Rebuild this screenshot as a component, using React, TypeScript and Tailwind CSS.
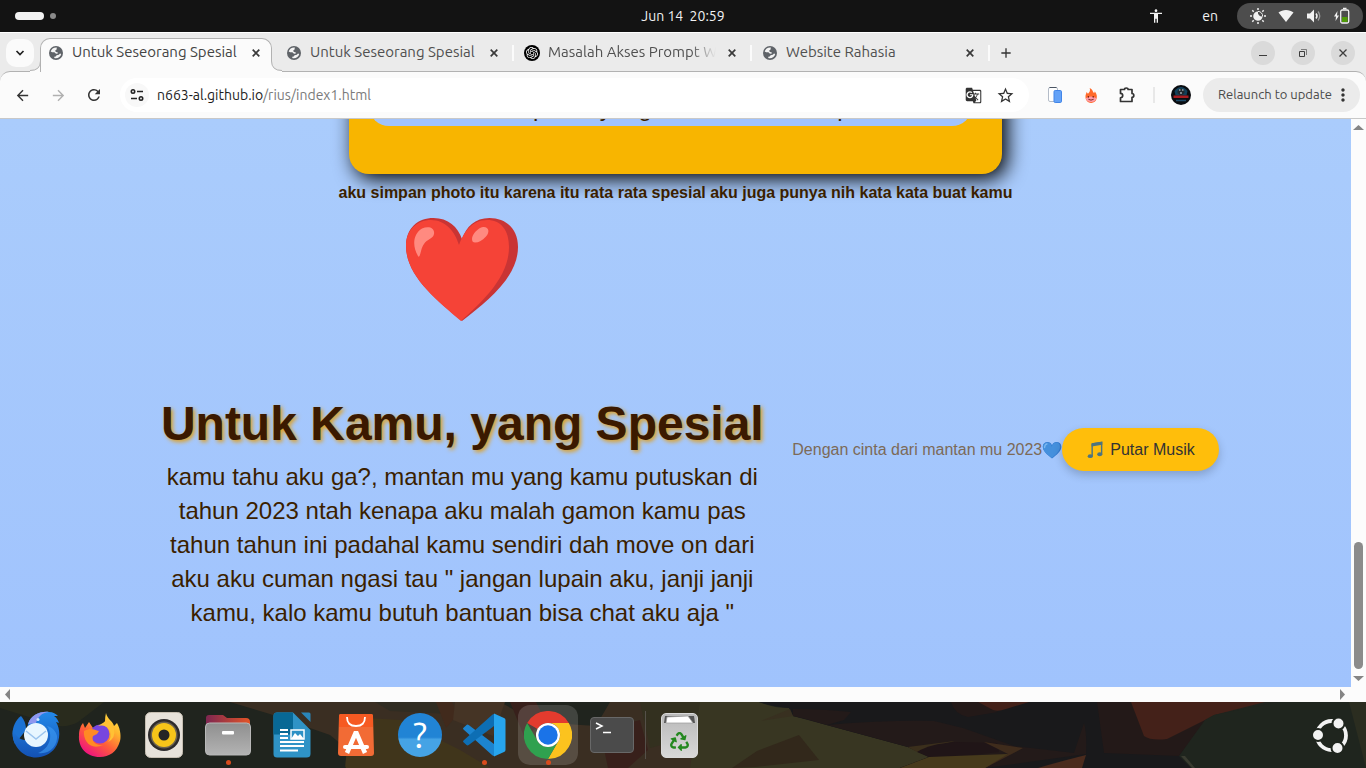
import React from "react";
import {
  MdAccessibility,
  MdArrowBack,
  MdArrowForward,
  MdGTranslate,
  MdMoreVert,
  MdRefresh,
  MdStarBorder,
  MdAdd,
} from "react-icons/md";
import { SiOpenai } from "react-icons/si";
import { FaRecycle } from "react-icons/fa";

/* ---------- desktop top bar ---------- */

function TopBar() {
  return (
    <header className="grid h-8 shrink-0 grid-cols-[1fr_auto_1fr] items-center bg-[#131313] text-sm text-[#f2f2f2]">
      <div className="flex items-center gap-[6px] pl-[15px]">
        <span className="h-2 w-[29px] rounded-full bg-[#f2f2f2]" />
        <span className="h-[6px] w-[6px] rounded-full bg-[#8a8a8a]" />
      </div>
      <time className="pb-px whitespace-pre">Jun 14  20:59</time>
      <div className="flex items-center justify-end pr-[3px]">
        <MdAccessibility size={16} className="mr-[38px]" />
        <span className="mr-[19px]">en</span>
        <div className="flex h-[26px] w-[126px] items-center justify-around rounded-full bg-[#4d4d4d] px-[6px]">
          <svg width="18" height="18" viewBox="0 0 18 18">
            <g stroke="#f2f2f2" strokeWidth="1.5">
              <path d="M9 1v2M9 15v2M1 9h2M15 9h2M3.3 3.3l1.4 1.4M13.3 13.3l1.4 1.4M3.3 14.7l1.4-1.4M13.3 4.7l1.4-1.4" />
            </g>
            <path d="M9 4.400A4.700 4.700 0 1 0 13.600 9.500 4.200 4.200 0 0 1 9 4.400z" fill="#f2f2f2" />
            <path d="M9 4.400a4.600 4.600 0 0 1 4.600 5.100" fill="none" stroke="#f2f2f2" />
          </svg>
          <svg width="16" height="16" viewBox="0 0 16 16">
            <path d="M0.500 4.500C4.500 1 11.500 1 15.500 4.500L8 14z" fill="#f2f2f2" />
          </svg>
          <svg width="16" height="16" viewBox="0 0 16 16">
            <path d="M1 5.500h3l4-4v13l-4-4H1z" fill="#f2f2f2" />
            <path d="M10 5.500q2 2.500 0 5" fill="none" stroke="#f2f2f2" strokeWidth="1.500" />
            <path d="M12 3.500q3.500 4.500 0 9" fill="none" stroke="#999" strokeWidth="1.300" />
          </svg>
          <svg width="18" height="18" viewBox="0 0 18 18">
            <path d="M4.500 4 1 9.500h2L2.500 14 6 8.500H4z" fill="#f2f2f2" />
            <rect x="7.700" y="3" width="8" height="13" rx="1.500" fill="none" stroke="#f2f2f2" strokeWidth="1.300" />
            <path d="M10 1.500h3.500" stroke="#f2f2f2" strokeWidth="1.500" />
            <path d="M9 10h5.500v5H9z" fill="#4e9a06" />
          </svg>
        </div>
      </div>
    </header>
  );
}

/* ---------- browser chrome ---------- */

function Globe() {
  return (
    <svg width="14" height="14" viewBox="0 0 14 14">
      <circle cx="7" cy="7" r="7" fill="#5f6368" />
      <path d="M7.800 1.600C5 1.300 2.300 3 1.700 5.600L3.200 6.200H5.400L7 7.700 8.800 7.600 8.600 6.300 6.800 6.100 6.200 4.600 7.600 3.500z" fill="#f4f4f4" />
      <path d="M5.300 12.100C8.500 13 11.700 11 12.200 8L11 7.500 9.800 8.800 7.600 9.300 6.700 10.600 5.300 10.800z" fill="#f4f4f4" />
    </svg>
  );
}

function GptIcon() {
  return (
    <span className="flex h-4 w-4 items-center justify-center rounded-full bg-black text-white">
      <SiOpenai size={12} />
    </span>
  );
}

function TabBody({ title, icon, fade = false }: { title: string; icon: React.ReactNode; fade?: boolean }) {
  return (
    <>
      <span className="flex w-4 shrink-0 justify-center">{icon}</span>
      <span
        className={
          fade
            ? "w-[168px] shrink-0 overflow-hidden whitespace-nowrap [mask-image:linear-gradient(to_right,black_85%,transparent)]"
            : "w-[168px] shrink-0 overflow-hidden whitespace-nowrap"
        }
      >
        {title}
      </span>
      <button aria-label="Close tab" className="flex h-4 w-4 shrink-0 items-center justify-center text-[#3a3a3a]">
        <svg width="8" height="8" viewBox="0 0 8 8">
          <path d="m.7.700 6.600 6.600m0-6.600L.7 7.300" stroke="currentColor" strokeWidth="1.700" />
        </svg>
      </button>
    </>
  );
}

function TabStrip() {
  return (
    <div className="relative z-10 -mb-px flex h-10 items-end border-t border-white pr-[11px] text-[15px] text-[#505050]">
      <div className="flex h-full w-[30px] shrink-0 items-center pl-[6px]">
        <button aria-label="Search tabs" className="flex h-7 w-7 shrink-0 items-center justify-center rounded-[10px] bg-[#fbfbfb] text-[#222]">
          <svg width="10" height="8" viewBox="0 0 10 8">
            <path d="m1.500 2 3.500 3.500L8.500 2" fill="none" stroke="currentColor" strokeWidth="1.700" />
          </svg>
        </button>
      </div>
      <svg className="relative -z-10 shrink-0" width="11" height="11" viewBox="0 0 11 11">
        <path d="M0 10Q10.500 10 10.500 0H11V11H0z" fill="#fbfbfb" />
        <path d="M0 9.500Q10.500 9.500 10.500 0" fill="none" stroke="#b2b2b2" />
      </svg>
      <div className="-ml-px flex h-[34px] shrink-0 items-center gap-2 rounded-t-[10px] border border-b-0 border-[#b2b2b2] bg-[#fbfbfb] px-[7px] pb-[6px] text-[#444]">
        <TabBody title="Untuk Seseorang Spesial" icon={<Globe />} />
      </div>
      <svg className="-ml-px shrink-0" width="11" height="11" viewBox="0 0 11 11">
        <path d="M11 10Q.5 10 .5 0H0V11H11z" fill="#fbfbfb" />
        <path d="M11 9.500Q.5 9.500 .5 0" fill="none" stroke="#b2b2b2" />
      </svg>
      <div className="flex h-full items-center">
        <div className="flex h-4 w-[232px] items-center gap-2 border-r-2 border-[#fbfbfb] pl-1">
          <TabBody title="Untuk Seseorang Spesial" icon={<Globe />} />
        </div>
        <div className="flex h-4 w-[238px] items-center gap-2 border-r-2 border-[#fbfbfb] pl-[10px]">
          <TabBody title="Masalah Akses Prompt Web" icon={<GptIcon />} fade />
        </div>
        <div className="flex h-4 w-[238px] items-center gap-2 border-r-2 border-[#fbfbfb] pl-[10px]">
          <TabBody title="Website Rahasia" icon={<Globe />} />
        </div>
        <button aria-label="New tab" className="ml-2 flex h-4 w-4 items-center justify-center text-[#333]">
          <MdAdd size={18} />
        </button>
      </div>
      <div className="ml-auto flex h-full items-center gap-4 text-[#3d3d3d]">
        <button aria-label="Minimize" className="flex h-6 w-6 items-center justify-center rounded-full bg-[#dadada]">
          <svg width="10" height="10" viewBox="0 0 10 10">
            <path d="M1 7.500h8" stroke="currentColor" />
          </svg>
        </button>
        <button aria-label="Restore" className="flex h-6 w-6 items-center justify-center rounded-full bg-[#dadada]">
          <svg width="10" height="10" viewBox="0 0 10 10" fill="none" stroke="currentColor">
            <path d="M1.500 3.500h5v5h-5z" />
            <path d="M3 1.500h5.500V7" opacity=".6" />
          </svg>
        </button>
        <button aria-label="Close window" className="flex h-6 w-6 items-center justify-center rounded-full bg-[#dadada]">
          <svg width="10" height="10" viewBox="0 0 10 10">
            <path d="m1.500 1.500 7 7m0-7-7 7" stroke="currentColor" strokeWidth="1.300" />
          </svg>
        </button>
      </div>
    </div>
  );
}

function Toolbar() {
  return (
    <div className="flex h-12 items-center rounded-t-[10px] border-t border-b border-t-[#b2b2b2] border-b-[#c8c8c8] bg-[#fbfbfb] pr-[6px] pl-1 text-[#333]">
      <button aria-label="Back" className="flex w-9 justify-center"><MdArrowBack size={17} /></button>
      <button aria-label="Forward" className="flex w-9 justify-center text-[#b0b0b0]"><MdArrowForward size={17} /></button>
      <button aria-label="Reload" className="flex w-9 justify-center"><MdRefresh size={18} /></button>
      <div className="ml-2 flex h-[34px] min-w-0 flex-1 items-center rounded-full bg-white pl-[5px]">
        <button aria-label="Site information" className="flex h-6 w-6 items-center justify-center rounded-full bg-[#f8f8f8]">
          <svg width="14" height="14" viewBox="0 0 14 14" fill="none" stroke="#222" strokeWidth="1.600">
            <circle cx="3" cy="3.500" r="1.700" />
            <path d="M7 3.500h6M1 10.500h6" />
            <circle cx="11" cy="10.500" r="1.700" />
          </svg>
        </button>
        <p className="flex-1 pl-2 text-[14px] text-[#7a7a7a]">
          <span className="text-[#1c1c1c]">n663-al.github.io</span>/rius/index1.html
        </p>
        <button aria-label="Translate this page" className="flex w-8 justify-center"><MdGTranslate size={17} /></button>
        <button aria-label="Bookmark this tab" className="mr-2 flex w-8 justify-center"><MdStarBorder size={19} /></button>
      </div>
      <button aria-label="Mobile simulator" className="ml-2 flex w-9 justify-center">
        <svg width="16" height="18" viewBox="0 0 16 18">
          <rect x="1.500" y="1.500" width="9" height="14" rx="1.500" fill="#fff" stroke="#b4bcc8" />
          <path d="M2.500 1.500h7" stroke="#4b5563" />
          <rect x="7" y="4.500" width="7.500" height="12" rx="1.200" fill="#64a2f7" stroke="#4285e8" />
        </svg>
      </button>
      <button aria-label="Fire extension" className="flex w-9 justify-center">
        <svg width="14" height="17" viewBox="0 0 16 18">
          <path d="M6.500.5C11 3 9.500 5 11.500 6c.8-.6.8-1.500.8-2C15 8 15 10 14.400 12.500A6.500 6.500 0 0 1 8 17.500 6.300 6.300 0 0 1 1.700 11C1.500 8.500 2.500 7 3 5l1.500 2C6.500 5.500 7.500 3.500 6.500.5z" fill="#ff6a2b" />
          <path d="M2 12q6-4 12.300 0A6.500 6.500 0 0 1 2 12z" fill="#ff9aa8" />
          <path d="M5 10.500v.2M10.500 10.500v.2" stroke="#6b1d10" strokeWidth="1.600" strokeLinecap="round" />
          <path d="M5 13.300q3 2 6 0" fill="none" stroke="#6b1d10" />
        </svg>
      </button>
      <button aria-label="Extensions" className="flex w-9 justify-center">
        <svg width="18" height="18" viewBox="0 0 18 18" fill="none" stroke="#333" strokeWidth="1.700" strokeLinejoin="round">
          <path d="M2.500 3.500h4a1.800 1.500 0 0 1 3.600 0H14v4a1.800 1.900 0 0 1 0 3.800v4.200H2.500v-3.700a2.200 2.200 0 0 0 0-4.400z" />
        </svg>
      </button>
      <span className="mx-2 h-4 w-[2px] bg-[#e8e8e8]" />
      <button aria-label="Profile" className="flex w-9 justify-center">
        <svg width="20" height="20" viewBox="0 0 20 20">
          <circle cx="10" cy="10" r="10" fill="#0a0c10" />
          <path d="M3.500 6q6.500-8 13 0l-1 4.500h-11z" fill="#12405a" />
          <path d="M6.500 6q3.500-5 7 0v2l-3.500 3-3.500-3z" fill="#20282e" />
          <path d="M8 5h1.500M11 5h1.500M9 8h2" stroke="#d7e5ea" />
          <path d="M2.500 10.500h15v2.500h-15z" fill="#a71c20" />
          <path d="M5 15.500h10" stroke="#1d4a68" strokeWidth="1.500" />
        </svg>
      </button>
      <button className="ml-1 flex h-[34px] w-[157px] items-center justify-between rounded-full bg-[#ebebeb] pr-2 pl-[15px] text-[13px] whitespace-nowrap text-[#4a4a4a]">
        Relaunch to update
        <MdMoreVert size={20} className="-mx-px shrink-0 text-[#333]" />
      </button>
    </div>
  );
}

/* ---------- web page ---------- */

function RedHeart() {
  return (
    <svg width="114" height="105" viewBox="0 0 114 105" role="img" aria-label="Heart">
      <path d="M57 104C30 82 1 58 1 29 1 11 13 1 28.500 1 43 1 53 10 57 22 61 10 70 1 84.500 1 101 1 113 12 113 30c0 30-30 54-56 74z" fill="#c93434" />
      <path d="M56 104C30 82 1 58 1 29 1 13 12 3 26 3c14 0 24 11 28 25 5-14 14-25 28-25 14 0 22 10 22 27 0 30-26 54-48 74z" fill="#f54337" />
      <path d="M13 39C7 29 8 17 17 11.500c7-3 13-.5 12 5.500-1 5-7 5-10 10-3 4-3 9-4.500 12-.8 1-1 .8-1.500 0z" fill="#ff8a80" />
      <path d="M67 22c0-5 6-11 11-12 6-.5 7 5 3 9.500-4 4-7 6-11 6-2 0-3-1-3-3.500z" fill="#ff8a80" />
    </svg>
  );
}

function BlueHeart() {
  return (
    <svg className="inline" width="20" height="20" viewBox="0 0 20 20" role="img" aria-label="Blue heart">
      <path d="M10 18.500C5 14.500.8 11 .8 6.500.8 3.500 3 2 5.500 2 8 2 9.500 3.500 10 5.500 10.500 3.500 12 2 14.500 2c3 0 4.900 1.700 4.900 4.700 0 4.500-4.900 8.300-9.400 11.800z" fill="#347bd1" />
      <path d="M9.800 18C5 14 .8 11 .8 6.500.8 3.800 3 2.400 5.300 2.400 8 2.400 9.300 4.500 9.700 6.700 10.500 4 12 2.400 14.300 2.400c2.400 0 3.700 1.700 3.700 4.300 0 4.300-4.500 8-8.200 11.300z" fill="#4590dd" />
      <path d="M2.600 7.500q0-3 2.400-3.600" fill="none" stroke="#7db9f2" strokeWidth="1.300" strokeLinecap="round" />
    </svg>
  );
}

function Notes() {
  return (
    <svg width="18" height="18" viewBox="0 0 19 19" aria-hidden="true">
      <path d="M6.500 3 16.500 1.500v12.500M6.500 3v13" fill="none" stroke="#4d7480" strokeWidth="1.500" />
      <path d="M5.800 2.500 17.200.7v3.300L6 5.700z" fill="#4d7480" />
      <ellipse cx="4.500" cy="16" rx="2.700" ry="2" fill="#4d7480" />
      <ellipse cx="14.500" cy="14" rx="2.700" ry="2" fill="#4d7480" />
    </svg>
  );
}

function WebPage() {
  return (
    <main className="flex min-w-0 flex-1 flex-col items-center overflow-hidden bg-linear-to-b from-[#aaccfc] to-[#a0c3fd] font-['Liberation_Sans',Arial,sans-serif] text-[#3b1f00]">
      <section className="-mt-10 w-[653px] rounded-[20px] bg-[#f8b500] pt-10 pr-[30px] pb-12 pl-5 shadow-[5px_5px_20px_#000]">
        <div className="-mt-10 flex h-[47px] items-end justify-center rounded-b-[20px] bg-[#a1c3fc] pb-1">
          <p className="text-2xl leading-7">ini lah photo yang rata rata aku simpan</p>
        </div>
      </section>
      <p className="mt-[10px] text-base leading-[18px] font-bold">
        aku simpan photo itu karena itu rata rata spesial aku juga punya nih kata kata buat kamu
      </p>
      <div className="flex items-center pt-[15px]">
        <article className="flex w-[660px] flex-col items-center px-[30px] pb-[52px] text-center">
          <RedHeart />
          <h1 className="mt-[74px] text-5xl leading-[56px] font-bold whitespace-nowrap text-[#3b1900] [text-shadow:2px_2px_4px_#e0a020]">
            Untuk Kamu, yang Spesial
          </h1>
          <p className="mt-2 text-2xl leading-[34px]">
            kamu tahu aku ga?, mantan mu yang kamu putuskan di tahun 2023 ntah kenapa aku malah gamon kamu pas tahun
            tahun ini padahal kamu sendiri dah move on dari aku aku cuman ngasi tau " jangan lupain aku, janji janji
            kamu, kalo kamu butuh bantuan bisa chat aku aja "
          </p>
        </article>
        <footer className="flex items-center text-base whitespace-nowrap text-[#7c6a58]">
          Dengan cinta dari mantan mu 2023
          <BlueHeart />
        </footer>
        <button className="flex h-[43px] items-center gap-[6px] rounded-full bg-[#ffbe0b] px-6 text-base whitespace-nowrap text-[#333] shadow-[0_4px_10px_rgba(0,0,0,0.2)]">
          <Notes />
          Putar Musik
        </button>
      </div>
    </main>
  );
}

function Arrow({ d }: { d: string }) {
  return (
    <svg width="11" height="11" viewBox="0 0 11 11" className="shrink-0">
      <path d={d} fill="#858585" />
    </svg>
  );
}

function Viewport() {
  return (
    <div className="flex min-h-0 flex-1 flex-col bg-[#fcfcfc]">
      <div className="flex min-h-0 flex-1">
        <WebPage />
        <div className="flex w-[15px] shrink-0 flex-col items-center py-[3px]">
          <Arrow d="M0 8h11L5.500 3z" />
          <span className="mt-auto mb-1 h-[127px] w-[9px] rounded-full bg-[#8b8b8b]" />
          <Arrow d="M0 3h11L5.500 8z" />
        </div>
      </div>
      <div className="flex h-[15px] shrink-0 items-center justify-between pr-[18px] pl-[2px]">
        <Arrow d="M8 0v11L3 5.500z" />
        <Arrow d="M3 0v11l5-5.500z" />
      </div>
    </div>
  );
}

/* ---------- dock ---------- */

function Camo() {
  return (
    <svg className="col-start-1 row-start-1 h-full w-full" viewBox="0 0 1366 66" preserveAspectRatio="none" aria-hidden="true">
      <path d="M0 0h1366v66H0z" fill="#20241e" />
      <path d="M0 0h104L78 20q-8 5-20 4L0 6z" fill="#292b1d" />
      <path d="M230 0h480v66H370L330 33 270 12z" fill="#3a2e22" />
      <path d="M360 0h75l15 12-60-3-15-9z" fill="#302c22" />
      <path d="M350 15l50 3 60 30 30 18H345z" fill="#40351b" />
      <path d="M330 34l16 32h-16zM500 0h110l-14 24-60-4z" fill="#20241e" />
      <path d="M510 0h26l10 20-22 14zM600 28l40-10 8 30-20 18h-20z" fill="#38201b" />
      <path d="M436 0h16l6 12-12 14z" fill="#412a1c" />
      <path d="M455 0h50l-12 34-40-16z" fill="#453425" />
      <path d="M640 0h60l10 30-60 16z" fill="#33301f" />
      <path d="M700 0h59q15 6 30 6l4 8q16 3 30 8l85 23q15 4 21 10l-29 11H690z" fill="#383622" />
      <path d="M732 66l25-17 42-16 20 25-64 7z" fill="#32281b" />
      <path d="M759 0h440v66H900l29-11-21-10-85-23-30-8-4-8Q770 4 759 0z" fill="#19191b" />
      <path d="M761 19 790 7l3 7z" fill="#383020" />
      <path d="M793 7q30 0 58 3l-7 8-17 5-25-7-9-2z" fill="#231a19" />
      <path d="M827 23q60-5 107-4l29 7 51 18 60 7 10-30q3 10 2 31l-101 14h-85l29-11-21-10z" fill="#231a19" />
      <path d="M908 45l47-6-38 11z" fill="#3b2f1c" />
      <path d="M917 50q12-8 38-10l42 1 2 9-27 3-43 2z" fill="#201517" />
      <path d="M984 40l39 6-38 20h-15l38-14z" fill="#3f2c1c" />
      <path d="M929 55l79-3-23 14h-85z" fill="#473a1c" />
      <path d="M1038 66q20-6 48-13l-4 13z" fill="#4b2b1d" />
      <path d="M951 0h27l20 10-30 5q-14-3-17-15zM1097 0h110v18l-28 36-75-3z" fill="#231918" />
      <path d="M978 0h51l-23 7q-8 3-13 1z" fill="#442119" />
      <path d="M1131 0h134l-51 13-9 5-38 19q-16 2-23-3z" fill="#442119" />
      <path d="M1278 0h88v66h-175l-12-12 26-36 9-5z" fill="#1f251e" />
      <path d="M1181 54h4l10 12h-3z" fill="#393b30" />
      <path d="M1349 0h17v66z" fill="#2b2d20" />
    </svg>
  );
}

function Thunderbird() {
  return (
    <svg width="50" height="50" viewBox="0 0 50 50">
      <defs>
        <linearGradient id="tb-body" x1="0" y1="0" x2="0" y2="1">
          <stop offset="0" stopColor="#2389e9" />
          <stop offset="1" stopColor="#1351b4" />
        </linearGradient>
      </defs>
      <path d="M10 6c4 5 5 9 5 14L4 34C-1 24 2 12 10 6z" fill="#1b72d4" />
      <path d="M17 14C20 5 29 1 38 2c4 0 7 2 9 4h-4c3 2 4 4 5 7l-3-1c5 8 4 19-1 26-8 11-25 13-35 3C2 34 1 25 2 20c3 6 7 10 12 10z" fill="url(#tb-body)" />
      <path d="M17 14C20 5 29 1 38 2c-8 1-11 5-13 11z" fill="#8f97ef" />
      <path d="M36 16c6 8 4 22-9 27 12 2 20-8 19-17-1-5-5-9-10-10z" fill="#3f9cf5" opacity=".6" />
      <circle cx="25" cy="25" r="12" fill="#e8f6ff" />
      <path d="m15 21 10 8 10-8" fill="none" stroke="#9cc4ee" strokeWidth="1.500" />
      <circle cx="27" cy="9.500" r="1.500" fill="#cfeaff" />
    </svg>
  );
}

function Firefox() {
  return (
    <svg width="44" height="46" viewBox="0 0 44 46">
      <defs>
        <linearGradient id="ff-body" x1="1" y1="0" x2=".3" y2="1">
          <stop offset="0" stopColor="#fff04c" />
          <stop offset=".35" stopColor="#ffb42e" />
          <stop offset=".65" stopColor="#ff5f38" />
          <stop offset="1" stopColor="#ef147e" />
        </linearGradient>
      </defs>
      <path d="M28 1c1 6 7 8 8 13l3-3c4 7 4 15 3 18-3 11-11 16-20 16C8 45 0 35 1 23c0-5 2-10 4-12l2 5 4-6 4 6 8 1 4-8q0-4 1-8z" fill="url(#ff-body)" />
      <circle cx="22" cy="22" r="9.500" fill="#7746df" />
      <path d="M6 19c8-4 10-1 15 0l-2 3-4 2c-2 5 3 10 10 9-13 6-20-5-19-14z" fill="#ff8a24" />
      <path d="M20 14q8-2 12 5 2 7-2 11 8-4 6-13-2-6-8-8z" fill="#ffc134" />
    </svg>
  );
}

function Speaker() {
  return (
    <svg width="38" height="46" viewBox="0 0 38 46">
      <rect x=".5" y=".5" width="37" height="45" rx="5" fill="#e7e2da" stroke="#c6beb2" />
      <circle cx="19" cy="23" r="16" fill="#2d2b2c" />
      <circle cx="19" cy="23" r="13.500" fill="#6b6250" />
      <circle cx="19" cy="23" r="12" fill="#f6c51a" />
      <circle cx="19" cy="23" r="5.500" fill="#252525" />
    </svg>
  );
}

function Files() {
  return (
    <svg width="46" height="42" viewBox="0 0 46 42">
      <defs>
        <linearGradient id="files-back">
          <stop offset="0" stopColor="#7d2651" />
          <stop offset="1" stopColor="#e35427" />
        </linearGradient>
        <linearGradient id="files-front" x1="0" y1="0" x2="0" y2="1">
          <stop offset="0" stopColor="#8f8f8f" />
          <stop offset="1" stopColor="#b3b3b3" />
        </linearGradient>
      </defs>
      <path d="M1 4q0-3 3-3h14l4 3h19q4 0 4 4v12H1z" fill="url(#files-back)" />
      <rect x=".5" y="9" width="45" height="32" rx="4" fill="url(#files-front)" stroke="#b8b8b8" />
      <rect x="17" y="17" width="12" height="3.500" rx="1" fill="#fff" />
    </svg>
  );
}

function Writer() {
  return (
    <svg width="38" height="46" viewBox="0 0 38 46">
      <path d="M4 .5h16L37.500 18v24q0 3.500-4 3.500H4q-3.500 0-3.500-3.500V4Q.5.500 4 .5z" fill="#2f93c6" />
      <path d="M4 .5h16v22H.5V4Q.5.500 4 .5z" fill="#086895" />
      <path d="M28 .5h8q1.500 0 1.500 1.500v8z" fill="#2a85b8" />
      <path d="M7 18h8M7 22h8M7 26h8M7 30h24M7 34h24M7 38.500h18" stroke="#fff" strokeWidth="2" />
      <rect x="18" y="18" width="13" height="9" fill="#2d91c5" stroke="#fff" strokeWidth="1.500" />
      <path d="m18 27 4-6 3 3 2-2 4 5z" fill="#fff" />
    </svg>
  );
}

function AppCenter() {
  return (
    <svg width="38" height="44" viewBox="0 0 38 44">
      <path d="M4 1h30q2 0 2 2l1 37q0 3-3 3H4q-3 0-3-3L2 3q0-2 2-2z" fill="#f26b35" />
      <path d="M4 1h30q2 0 2 2v11H2V3q0-2 2-2z" fill="#f65a22" />
      <path d="M10 4q0 9 9 9t9-9" fill="none" stroke="#fff" strokeWidth="1.800" />
      <path d="m10 40 9-21 9 21" fill="none" stroke="#fff" strokeWidth="4.500" strokeLinejoin="bevel" />
      <path d="M8 34h22" stroke="#fff" strokeWidth="4" strokeLinecap="round" />
    </svg>
  );
}

function Help() {
  return (
    <span className="flex h-11 w-11 items-center justify-center rounded-full bg-linear-to-b from-[#2184d5] from-55% to-[#45a3e5] to-60% text-[36px] leading-none text-white">
      ?
    </span>
  );
}

function VsCode() {
  return (
    <svg width="44" height="44" viewBox="0 0 44 44">
      <path d="M1.500 16.500Q.5 15.500 1.500 14.700L4.500 12q1-.8 2.200 0L32 31v12q-1 0-2-1z" fill="#1c84cf" />
      <path d="M1.500 27.500Q.5 28.500 1.500 29.300l3 2.700q1 .8 2.200 0L32 13V1q-1 0-2 1z" fill="#0d6eb4" />
      <path d="M32 .5 42 5q1.500.7 1.500 2v30q0 1.300-1.500 2L32 43.500z" fill="#27a5ee" />
    </svg>
  );
}

function Chrome() {
  return (
    <svg width="48" height="48" viewBox="0 0 48 48">
      <path d="M3.200 12A24 24 0 0 1 44.800 12H24A12 12 0 0 0 13.600 18z" fill="#e33b2e" />
      <path d="M44.800 12A24 24 0 0 1 24 48l10.400-18A12 12 0 0 0 24 12z" fill="#fcc31e" />
      <path d="M24 48A24 24 0 0 1 3.200 12l10.400 18A12 12 0 0 0 34.400 30z" fill="#2fa14f" />
      <circle cx="24" cy="24" r="12" fill="#fff" />
      <circle cx="24" cy="24" r="9.700" fill="#1a73e8" />
    </svg>
  );
}

function Terminal() {
  return (
    <svg width="44" height="36" viewBox="0 0 44 36">
      <rect x=".5" y=".5" width="43" height="35" rx="3.500" fill="#4b4b4b" stroke="#686868" />
      <path d="m6 6 6 3-6 3M13 15.500h8" fill="none" stroke="#fff" strokeWidth="1.500" />
    </svg>
  );
}

function Trash() {
  return (
    <span className="flex h-[45px] w-[37px] flex-col items-center rounded-[5px] border border-[#d9d9d9] bg-linear-to-b from-[#b9b9b9] to-[#d8d8d8]">
      <svg width="31" height="10" viewBox="0 0 31 10">
        <path d="M1 2h29l1 7H0z" fill="#555" />
        <path d="m3 3 21-1 5 7H2z" fill="#fff" stroke="#999" strokeWidth=".7" />
      </svg>
      <FaRecycle size={19} className="mt-2 text-[#23881f]" />
    </span>
  );
}

function UbuntuLogo() {
  return (
    <svg width="38" height="38" viewBox="0 0 38 38">
      <circle cx="19.500" cy="19.500" r="14.500" fill="none" stroke="#f2f2f2" strokeWidth="3.800" />
      <g fill="#f2f2f2" stroke="#1f251e" strokeWidth="2">
        <circle cx="6" cy="19" r="6" />
        <circle cx="26.500" cy="7.500" r="6" />
        <circle cx="25.500" cy="32" r="6" />
      </g>
    </svg>
  );
}

const apps: { name: string; icon: React.ReactNode; running?: boolean; active?: boolean }[] = [
  { name: "Thunderbird", icon: <Thunderbird /> },
  { name: "Firefox", icon: <Firefox /> },
  { name: "Rhythmbox", icon: <Speaker /> },
  { name: "Files", icon: <Files />, running: true },
  { name: "LibreOffice Writer", icon: <Writer /> },
  { name: "App Center", icon: <AppCenter /> },
  { name: "Help", icon: <Help /> },
  { name: "Visual Studio Code", icon: <VsCode />, running: true },
  { name: "Google Chrome", icon: <Chrome />, running: true, active: true },
  { name: "Terminal", icon: <Terminal /> },
];

function Dock() {
  return (
    <nav className="grid h-[66px] shrink-0 grid-cols-1">
      <Camo />
      <div className="col-start-1 row-start-1 flex items-center pr-4 pl-1">
        {apps.map((app) => (
          <div key={app.name} className="flex w-16 shrink-0 justify-center">
            <button
              aria-label={app.name}
              className={
                app.active
                  ? "relative flex h-[60px] w-[60px] items-center justify-center rounded-xl bg-white/15"
                  : "relative flex h-[60px] w-[60px] items-center justify-center rounded-xl"
              }
            >
              {app.icon}
              {app.running && <span className="absolute bottom-0 h-[5px] w-[5px] rounded-full bg-[#d94b1c]" />}
            </button>
          </div>
        ))}
        <span className="ml-px h-12 w-px bg-[#555049]" />
        <button aria-label="Trash" className="flex w-[66px] justify-center"><Trash /></button>
        <button aria-label="Show applications" className="ml-auto"><UbuntuLogo /></button>
      </div>
    </nav>
  );
}

export default function App() {
  return (
    <div className="flex h-screen flex-col overflow-hidden font-['Ubuntu','Noto_Sans',sans-serif]">
      <TopBar />
      <div className="shrink-0 bg-[#ebebeb]">
        <TabStrip />
        <Toolbar />
      </div>
      <Viewport />
      <Dock />
    </div>
  );
}
